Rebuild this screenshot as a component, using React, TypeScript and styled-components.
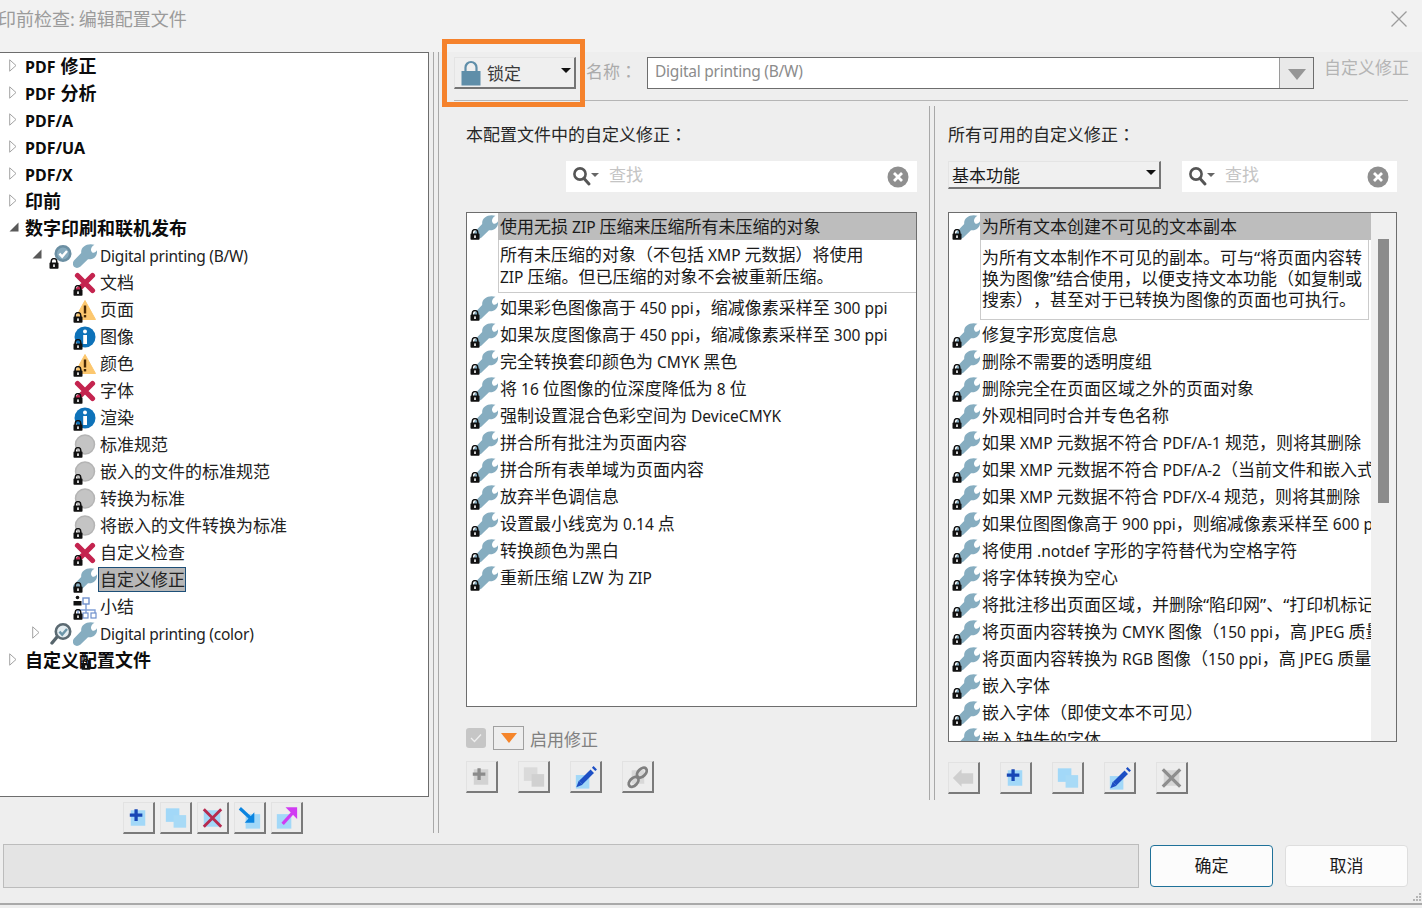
import React from "react";
import styled, { createGlobalStyle } from "styled-components";

const GlobalStyle = createGlobalStyle`
  html, body {
    margin: 0;
    padding: 0;
    background: #eeeeee;
  }
  body {
    font-family: "Noto Sans", "Noto Sans CJK SC", sans-serif;
    font-size: 17px;
    color: #1a1a1a;
    text-spacing-trim: space-all;
  }
`;

// latin runs are a bit smaller than the CJK around them
const Latin = styled.span`
  font-size: 15.5px;
`;

// the dialog's full-width colon sits centred in its cell
const Colon = styled.span`
  font-family: "Noto Sans CJK TC", sans-serif;
`;

const Txt = ({ children }: { children: string }) => (
  <>
    {children.split(/([A-Za-z0-9 .,()/\-]+)/).map((part, i) =>
      i % 2 === 1 ? <Latin key={i}>{part}</Latin> : part
    )}
  </>
);

/* ---------- icons ---------- */

const Wrench = ({ size = 24 }: { size?: number }) => (
  <svg width={size} height={size} viewBox="0 0 24 24">
    <path
      d="M21.5 0.8C14.5 -1.2 7.5 2.5 8.2 9L1 16.5C-0.5 18.5 -0.5 21 1 22.8C3 24.5 5.5 24.2 7.5 22.5L15 15.2C20 16.2 24.8 12.5 24 6.2C22.8 8.4 20.6 9.4 19 8.2C17 6.6 18 2.4 21.5 0.8Z"
      fill="#86adc0"
    />
  </svg>
);

const SmallLock = () => (
  <svg width="10" height="11" viewBox="0 0 10 11">
    <path d="M2.2 5V3.4a2.8 2.8 0 0 1 5.6 0V5" fill="none" stroke="#111" strokeWidth="1.5" />
    <rect x="0.5" y="4.6" width="9" height="6.2" rx="0.8" fill="#111" />
    <rect x="4.2" y="6.4" width="1.6" height="2.6" fill="#fff" />
  </svg>
);

const BigLock = () => (
  <svg width="20" height="26" viewBox="0 0 20 26">
    <path d="M4.5 12V7.5a5.5 5.5 0 0 1 11 0V12" fill="none" stroke="#5f8ea9" strokeWidth="2.2" />
    <rect x="0.5" y="11" width="19" height="14.5" fill="#5f8ea9" />
  </svg>
);

const ErrorIcon = () => (
  <svg width="22" height="22" viewBox="0 0 22 22">
    <path d="M3.5 3.5L18.5 18.5M18.5 3.5L3.5 18.5" stroke="#c4244f" strokeWidth="5.2" strokeLinecap="round" />
  </svg>
);

const WarnIcon = () => (
  <svg width="22" height="22" viewBox="0 0 22 22">
    <path d="M11 1.5L21.5 20.5H0.5Z" fill="#fcc76e" stroke="#fcc76e" strokeLinejoin="round" />
    <rect x="9.8" y="6.5" width="2.4" height="8" fill="#4a2a05" />
    <rect x="9.8" y="16" width="2.4" height="2.4" fill="#4a2a05" />
  </svg>
);

const InfoIcon = () => (
  <svg width="22" height="22" viewBox="0 0 22 22">
    <circle cx="11" cy="11" r="10.5" fill="#0e72b9" />
    <rect x="9.2" y="9" width="3.8" height="9" fill="#fff" />
    <circle cx="11" cy="5.6" r="2" fill="#fff" />
  </svg>
);

const IdleIcon = () => (
  <svg width="22" height="22" viewBox="0 0 22 22">
    <circle cx="11" cy="10.5" r="9.5" fill="#c4c4c4" stroke="#b4b4b4" strokeWidth="1.5" />
  </svg>
);

const SummaryIcon = () => (
  <svg width="24" height="24" viewBox="0 0 24 24">
    <path d="M13 8V20M5 15H22V20M5 15V20" fill="none" stroke="#7f9ed6" strokeWidth="1.4" />
    <rect x="10" y="3" width="6" height="6" fill="#fff" stroke="#6f90cc" strokeWidth="1.4" />
    <rect x="10" y="18" width="5" height="5" fill="#fff" stroke="#6f90cc" strokeWidth="1.2" />
    <rect x="18" y="18" width="5" height="5" fill="#fff" stroke="#6f90cc" strokeWidth="1.2" />
    <circle cx="4.5" cy="2.5" r="1.8" fill="#111" />
    <rect x="0.5" y="6" width="8" height="4.5" fill="#111" />
  </svg>
);

// filled lens on the active profile, clear lens on the other one
const InspectIcon = ({ active }: { active?: boolean }) => (
  <svg width="22" height="24" viewBox="0 0 22 24">
    {!active && <path d="M7 15L2 21" stroke="#57656c" strokeWidth="3.4" strokeLinecap="round" />}
    <circle
      cx="13"
      cy="9.5"
      r="7.2"
      fill={active ? "#86aabd" : "#e4edf1"}
      stroke={active ? "#6b8fa3" : "#5b6a72"}
      strokeWidth="2.6"
    />
    <path
      d="M9.4 9.6L12.2 12.6L17 7"
      fill="none"
      stroke={active ? "#fff" : "#6b95a8"}
      strokeWidth="2.4"
    />
  </svg>
);

const Closed = () => (
  <svg width="8" height="13" viewBox="0 0 8 13">
    <path d="M0.7 0.8L7 6.5L0.7 12.2Z" fill="#fff" stroke="#a3a3a3" />
  </svg>
);

const Open = () => (
  <svg width="10" height="10" viewBox="0 0 10 10">
    <path d="M9.5 0.5V9.5H0.5Z" fill="#595959" />
  </svg>
);

const SearchIcon = () => (
  <svg width="28" height="22" viewBox="0 0 28 22">
    <circle cx="8" cy="8" r="5.6" fill="none" stroke="#555" strokeWidth="2.6" />
    <path d="M12 12.5L17 18" stroke="#555" strokeWidth="3" strokeLinecap="round" />
    <path d="M19 7H27L23 11Z" fill="#666" />
  </svg>
);

const ClearIcon = () => (
  <svg width="22" height="22" viewBox="0 0 22 22">
    <circle cx="11" cy="11" r="10.5" fill="#8f8f8f" />
    <path d="M7 7L15 15M15 7L7 15" stroke="#fff" strokeWidth="2.8" />
  </svg>
);

type ToolKind = "add" | "copy" | "remove" | "import" | "export" | "edit" | "addOff" | "copyOff" | "link" | "back" | "removeOff";

const ToolIcon = ({ kind }: { kind: ToolKind }) => {
  const sky = "#a2d8f8";
  return (
    <svg width="30" height="30" viewBox="0 0 30 30">
      {kind === "add" && (
        <>
          <rect x="7" y="7" width="15" height="16" fill={sky} />
          <path d="M12.5 6V18M6 12H19" stroke="#1747b5" strokeWidth="3.4" />
        </>
      )}
      {kind === "addOff" && (
        <>
          <rect x="7" y="7" width="15" height="16" fill="#d2d2d2" />
          <path d="M12.5 6V18M6 12H19" stroke="#8b8b8b" strokeWidth="3.4" />
        </>
      )}
      {kind === "copy" && (
        <>
          <rect x="5" y="5" width="14" height="14" fill={sky} />
          <rect x="13" y="12" width="13" height="13" fill="#a8daf6" />
        </>
      )}
      {kind === "copyOff" && (
        <>
          <rect x="5" y="5" width="14" height="14" fill="#dadada" />
          <rect x="13" y="12" width="13" height="13" fill="#d0d0d0" />
        </>
      )}
      {kind === "remove" && (
        <>
          <rect x="6" y="7" width="17" height="17" fill={sky} />
          <path d="M6 6L24 24M24 6L6 24" stroke="#b62a4f" strokeWidth="3" />
        </>
      )}
      {kind === "removeOff" && (
        <>
          <rect x="7" y="7" width="16" height="16" fill="#d6d6d6" />
          <path d="M6 6L24 24M24 6L6 24" stroke="#8e8e8e" strokeWidth="3.4" />
        </>
      )}
      {kind === "import" && (
        <>
          <rect x="11" y="11" width="15" height="15" fill={sky} />
          <path d="M5 5L17 16" stroke="#0a84e0" strokeWidth="3.4" />
          <path d="M20 9V20H10Z" fill="#0a84e0" />
        </>
      )}
      {kind === "export" && (
        <>
          <rect x="5" y="11" width="15" height="15" fill={sky} />
          <path d="M11 21L22 9" stroke="#d03cf2" strokeWidth="3.4" />
          <path d="M14 4H26V16Z" fill="#d03cf2" />
        </>
      )}
      {kind === "edit" && (
        <>
          <rect x="5" y="13" width="14" height="14" fill={sky} />
          <path d="M10 21L22 9" stroke="#1d4fc4" strokeWidth="5" />
          <path d="M8 19L12 23L5.5 25.5Z" fill="#1d4fc4" />
          <path d="M22.5 4.5L26 8" stroke="#1d4fc4" strokeWidth="2.4" />
        </>
      )}
      {kind === "link" && (
        <>
          <rect x="9" y="8" width="13" height="14" fill="#d8d8d8" />
          <ellipse cx="11" cy="20" rx="6" ry="3.8" fill="none" stroke="#808080" strokeWidth="3" transform="rotate(-45 11 20)" />
          <ellipse cx="19.5" cy="10.5" rx="6" ry="3.8" fill="none" stroke="#808080" strokeWidth="3" transform="rotate(-45 19.5 10.5)" />
        </>
      )}
      {kind === "back" && <path d="M4 15L13 6V10H25V21H13V24Z" fill="#cfcfcf" />}
    </svg>
  );
};

/* ---------- layout ---------- */

const Page = styled.div`
  position: relative;
  width: 1422px;
  height: 908px;
  overflow: hidden;
  background: #eeeeee;
`;

const TitleBar = styled.div`
  height: 52px;
  box-sizing: border-box;
  display: flex;
  justify-content: space-between;
  padding: 7px 15px 0 0;
  background: #f2f2f2;
`;

const Title = styled.div`
  margin-left: -2px;
  font-size: 18px;
  line-height: 24px;
  color: #9b9b9b;
`;

const Body = styled.div`
  display: flex;
  height: 785px;
`;

const LeftPane = styled.div`
  width: 430px;
  margin-left: -1px;
  display: flex;
  flex-direction: column;
`;

const Tree = styled.div`
  height: 745px;
  box-sizing: border-box;
  border: 1px solid #6d6d6d;
  background: #fff;
`;

const TreeRow = styled.div<{ $indent: number; $bold?: boolean }>`
  position: relative;
  height: 27px;
  display: flex;
  align-items: center;
  padding-left: ${(p) => p.$indent}px;
  font-weight: ${(p) => (p.$bold ? 700 : 400)};
  font-size: ${(p) => (p.$bold ? 18 : 17)}px;
  color: ${(p) => (p.$bold ? "#0c0c0c" : "#222")};
  ${Latin} {
    font-size: ${(p) => (p.$bold ? 16 : 15.5)}px;
    word-spacing: ${(p) => (p.$bold ? 1 : 0)}px;
    letter-spacing: ${(p) => (p.$bold ? 0 : -0.24)}px;
  }
`;

const Twisty = styled.span<{ $width: number }>`
  flex: none;
  width: ${(p) => p.$width}px;
  display: flex;
  align-items: center;
  margin-top: -3px;
`;

const IconSlot = styled.span`
  position: relative;
  flex: none;
  width: 24px;
  height: 24px;
  display: flex;
  align-items: center;
  justify-content: center;
`;

const LockBadge = styled.span`
  position: absolute;
  left: 0;
  bottom: -1px;
  display: flex;
`;

const ProfileLock = styled.span`
  position: absolute;
  left: 56px;
  bottom: 2px;
  display: flex;
`;

const NodeLabel = styled.span<{ $selected?: boolean }>`
  margin-left: 3px;
  line-height: 23px;
  white-space: nowrap;
  ${(p) =>
    p.$selected &&
    `
    margin-left: 1px;
    padding-left: 1px;
    background: #b7b7b7;
    border: 1px solid #1d4f78;
  `}
`;

const BoldLabel = styled.span`
  position: relative;
  line-height: 24px;
  margin-bottom: 1px;
  white-space: nowrap;
`;

const TreeTools = styled.div`
  display: flex;
  justify-content: center;
  gap: 5px;
  margin-top: 5px;
  padding-right: 2px;
`;

const ToolButton = styled.button`
  flex: none;
  width: 32px;
  height: 32px;
  padding: 0;
  box-sizing: border-box;
  display: flex;
  align-items: center;
  justify-content: center;
  background: #ededed;
  border-style: solid;
  border-width: 1px 2px 2px 1px;
  border-color: #e2e2e2 #7a7a7a #7a7a7a #e2e2e2;
`;

const Splitter = styled.div`
  flex: none;
  width: 4px;
  margin-left: 4px;
  border-left: 1px solid #a8a8a8;
  border-right: 1px solid #a8a8a8;
  height: 781px;
`;

const RightPane = styled.div`
  flex: none;
  width: 966px;
  margin-left: 15px;
  position: relative;
`;

const TopRow = styled.div`
  height: 49px;
  box-sizing: border-box;
  display: flex;
  padding-top: 5px;
  width: 954px;
  border-bottom: 1px solid #b5b5b5;
`;

const LockCombo = styled.div`
  flex: none;
  width: 122px;
  height: 32px;
  box-sizing: border-box;
  display: flex;
  align-items: center;
  padding-left: 6px;
  background: #efefef;
  border-style: solid;
  border-width: 1px 2px 2px 1px;
  border-color: #e4e4e4 #757575 #757575 #e4e4e4;
  color: #3a3a3a;
`;

const ComboText = styled.span`
  flex: 1;
  margin-left: 6px;
`;

const CategoryText = styled.span`
  flex: 1;
`;

const ComboArrow = styled.span`
  width: 0;
  height: 0;
  margin-right: 3px;
  margin-top: -4px;
  border-left: 5px solid transparent;
  border-right: 5px solid transparent;
  border-top: 5px solid #111;
`;

const NameLabel = styled.span`
  flex: none;
  width: 61px;
  margin-left: 10px;
  line-height: 28px;
  color: #ababab;
`;

const NameField = styled.div`
  flex: none;
  width: 667px;
  height: 32px;
  box-sizing: border-box;
  display: flex;
  border: 1px solid #6d6d6d;
  background: #fff;
  ${Latin} {
    letter-spacing: -0.24px;
  }
`;

const NameValue = styled.span`
  flex: 1;
  padding-left: 7px;
  line-height: 26px;
  color: #8c8c8c;
`;

const NameDrop = styled.span`
  flex: none;
  width: 33px;
  display: flex;
  align-items: center;
  justify-content: center;
  background: #e9e9e9;
  border-left: 1px solid #9a9a9a;
`;

const NameTriangle = styled.span`
  width: 0;
  height: 0;
  margin-top: 2px;
  border-left: 9px solid transparent;
  border-right: 9px solid transparent;
  border-top: 11px solid #969696;
`;

const NameHint = styled.span`
  flex: none;
  margin-left: 10px;
  line-height: 22px;
  color: #b4b4b4;
`;

const Columns = styled.div`
  display: flex;
  padding: 5px 0 0 12px;
`;

const Column = styled.div<{ $width: number }>`
  flex: none;
  width: ${(p) => p.$width}px;
  padding-top: 16px;
`;

const ColumnSplit = styled.div`
  flex: none;
  width: 4px;
  height: 694px;
  margin: 0 13px 0 12px;
  border-left: 1px solid #a8a8a8;
  border-right: 1px solid #a8a8a8;
`;

const ColumnTitle = styled.div`
  height: 24px;
  line-height: 24px;
  color: #262626;
`;

const SearchRow = styled.div<{ $between?: boolean }>`
  display: flex;
  justify-content: ${(p) => (p.$between ? "space-between" : "flex-end")};
  margin-top: 15px;
  height: 31px;
`;

const SearchBox = styled.div<{ $width: number }>`
  width: ${(p) => p.$width}px;
  box-sizing: border-box;
  display: flex;
  align-items: center;
  padding: 0 8px 0 6px;
  background: #fff;
`;

const SearchHint = styled.span`
  flex: 1;
  margin-left: 9px;
  margin-top: -7px;
  color: #c4c4c4;
`;

const CategoryCombo = styled.div`
  width: 213px;
  height: 28px;
  box-sizing: border-box;
  display: flex;
  align-items: center;
  padding-left: 3px;
  background: #f0f0f0;
  border-style: solid;
  border-width: 1px 2px 2px 1px;
  border-color: #e4e4e4 #757575 #757575 #e4e4e4;
`;

const List = styled.div<{ $height: number }>`
  display: flex;
  margin-top: 20px;
  height: ${(p) => p.$height}px;
  box-sizing: border-box;
  border: 1px solid #6d6d6d;
  background: #fff;
  overflow: hidden;
`;

const ListBody = styled.div`
  flex: 1;
  min-width: 0;
  overflow: hidden;
`;

const Track = styled.div`
  flex: none;
  width: 25px;
  padding: 26px 0 0 7px;
  box-sizing: border-box;
  background: #f0f0f0;
`;

const Thumb = styled.div`
  width: 11px;
  height: 264px;
  background: #8b8b8b;
`;

const ListRow = styled.div`
  height: 27px;
  display: flex;
  padding-left: 3px;
`;

const FixSlot = styled.span`
  position: relative;
  flex: none;
  width: 28px;
  height: 27px;
  display: flex;
  align-items: center;
  justify-content: flex-end;
`;

const FixBadge = styled.span`
  position: absolute;
  left: 0;
  bottom: 0;
  display: flex;
`;

const FixLabel = styled.span<{ $selected?: boolean }>`
  flex: 1;
  min-width: 0;
  padding-left: 2px;
  line-height: 27px;
  white-space: nowrap;
  overflow: hidden;
  background: ${(p) => (p.$selected ? "#bdbdbd" : "transparent")};
`;

const FixDetail = styled.div<{ $top: number; $bottom: number; $line: number; $after: number; $boxed?: boolean }>`
  margin: 0 ${(p) => (p.$boxed ? 2 : 0)}px ${(p) => p.$after}px 31px;
  padding: ${(p) => p.$top}px 0 ${(p) => p.$bottom}px 1px;
  line-height: ${(p) => p.$line}px;
  white-space: nowrap;
  border-left: 1px solid #cbcbcb;
  border-bottom: 1px solid #cbcbcb;
  ${(p) => p.$boxed && "border-right: 1px solid #cbcbcb;"}
`;

const EnableRow = styled.div`
  display: flex;
  align-items: center;
  height: 24px;
  margin-top: 19px;
`;

const CheckBox = styled.span`
  width: 20px;
  height: 20px;
  display: flex;
  align-items: center;
  justify-content: center;
  border-radius: 3px;
  background: #c6c6c6;
`;

const MenuButton = styled.span`
  width: 31px;
  height: 24px;
  margin-left: 7px;
  box-sizing: border-box;
  display: flex;
  align-items: center;
  justify-content: center;
  border: 1px solid #a0a0a0;
`;

const MenuTriangle = styled.span`
  width: 0;
  height: 0;
  border-left: 8px solid transparent;
  border-right: 8px solid transparent;
  border-top: 10px solid #f5852a;
`;

const EnableLabel = styled.span`
  margin-left: 6px;
  color: #808080;
`;

const ToolRow = styled.div<{ $top: number }>`
  display: flex;
  gap: 20px;
  margin-top: ${(p) => p.$top}px;
`;

const Footer = styled.div`
  display: flex;
  align-items: center;
  height: 44px;
  margin-top: 7px;
  padding-left: 3px;
`;

const StatusBox = styled.div`
  width: 1136px;
  height: 44px;
  box-sizing: border-box;
  background: #e4e4e4;
  border: 1px solid #bcbcbc;
`;

const DialogButton = styled.button<{ $primary?: boolean }>`
  flex: none;
  width: 123px;
  height: 42px;
  margin-left: ${(p) => (p.$primary ? 11 : 12)}px;
  padding: 0 0 4px;
  font: inherit;
  color: #1a1a1a;
  background: #fcfcfc;
  border-radius: 4px;
  border: 1px solid ${(p) => (p.$primary ? "#1f7199" : "#dedede")};
`;

const BottomEdge = styled.div`
  height: 2px;
  margin-top: 15px;
  background: #a9a9a9;
`;

const CloseButton = styled.span`
  display: flex;
  margin-top: 4px;
`;

const Grip = styled.span`
  position: absolute;
  right: 0;
  bottom: 3px;
  display: flex;
`;

const Callout = styled.div`
  position: absolute;
  left: 442px;
  top: 39px;
  width: 143px;
  height: 68px;
  box-sizing: border-box;
  border: 5px solid #f5822c;
  pointer-events: none;
`;

/* ---------- data ---------- */

type Status = "error" | "warn" | "info" | "idle" | "fix" | "summary";

const checks: { label: string; status: Status; selected?: boolean }[] = [
  { label: "文档", status: "error" },
  { label: "页面", status: "warn" },
  { label: "图像", status: "info" },
  { label: "颜色", status: "warn" },
  { label: "字体", status: "error" },
  { label: "渲染", status: "info" },
  { label: "标准规范", status: "idle" },
  { label: "嵌入的文件的标准规范", status: "idle" },
  { label: "转换为标准", status: "idle" },
  { label: "将嵌入的文件转换为标准", status: "idle" },
  { label: "自定义检查", status: "error" },
  { label: "自定义修正", status: "fix", selected: true },
  { label: "小结", status: "summary" },
];

const statusIcon = (s: Status) => {
  if (s === "error") return <ErrorIcon />;
  if (s === "warn") return <WarnIcon />;
  if (s === "info") return <InfoIcon />;
  if (s === "idle") return <IdleIcon />;
  if (s === "summary") return <SummaryIcon />;
  return <Wrench />;
};

const profileFixes = [
  "如果彩色图像高于 450 ppi，缩减像素采样至 300 ppi",
  "如果灰度图像高于 450 ppi，缩减像素采样至 300 ppi",
  "完全转换套印颜色为 CMYK 黑色",
  "将 16 位图像的位深度降低为 8 位",
  "强制设置混合色彩空间为 DeviceCMYK",
  "拼合所有批注为页面内容",
  "拼合所有表单域为页面内容",
  "放弃半色调信息",
  "设置最小线宽为 0.14 点",
  "转换颜色为黑白",
  "重新压缩 LZW 为 ZIP",
];

const availableFixes = [
  "修复字形宽度信息",
  "删除不需要的透明度组",
  "删除完全在页面区域之外的页面对象",
  "外观相同时合并专色名称",
  "如果 XMP 元数据不符合 PDF/A-1 规范，则将其删除",
  "如果 XMP 元数据不符合 PDF/A-2（当前文件和嵌入式文件）规范，则将其删除",
  "如果 XMP 元数据不符合 PDF/X-4 规范，则将其删除",
  "如果位图图像高于 900 ppi，则缩减像素采样至 600 ppi",
  "将使用 .notdef 字形的字符替代为空格字符",
  "将字体转换为空心",
  "将批注移出页面区域，并删除“陷印网”、“打印机标记”",
  "将页面内容转换为 CMYK 图像（150 ppi，高 JPEG 质量）",
  "将页面内容转换为 RGB 图像（150 ppi，高 JPEG 质量）",
  "嵌入字体",
  "嵌入字体（即使文本不可见）",
  "嵌入缺失的字体",
];

const FixRow = ({ label, selected }: { label: string; selected?: boolean }) => (
  <ListRow>
    <FixSlot>
      <Wrench />
      <FixBadge>
        <SmallLock />
      </FixBadge>
    </FixSlot>
    <FixLabel $selected={selected}>
      <Txt>{label}</Txt>
    </FixLabel>
  </ListRow>
);

const TopNode = ({ label, open }: { label: string; open?: boolean }) => (
  <TreeRow $indent={9} $bold>
    <Twisty $width={16}>{open ? <Open /> : <Closed />}</Twisty>
    <BoldLabel>
      <Txt>{label}</Txt>
    </BoldLabel>
  </TreeRow>
);

export default function App() {
  return (
    <Page>
      <GlobalStyle />
      <TitleBar>
        <Title>
          <Txt>印前检查: 编辑配置文件</Txt>
        </Title>
        <CloseButton>
          <svg width="16" height="16" viewBox="0 0 16 16">
            <path d="M0.5 0.5L15.5 15.5M15.5 0.5L0.5 15.5" stroke="#9c9c9c" strokeWidth="1.3" />
          </svg>
        </CloseButton>
      </TitleBar>

      <Body>
        <LeftPane>
          <Tree>
            <TopNode label="PDF 修正" />
            <TopNode label="PDF 分析" />
            <TopNode label="PDF/A" />
            <TopNode label="PDF/UA" />
            <TopNode label="PDF/X" />
            <TopNode label="印前" />
            <TopNode label="数字印刷和联机发布" open />
            <TreeRow $indent={32}>
              <Twisty $width={17}>
                <Open />
              </Twisty>
              <IconSlot>
                <InspectIcon active />
                <LockBadge>
                  <SmallLock />
                </LockBadge>
              </IconSlot>
              <IconSlot>
                <Wrench />
              </IconSlot>
              <NodeLabel>
                <Txt>Digital printing (B/W)</Txt>
              </NodeLabel>
            </TreeRow>
            {checks.map((c) => (
              <TreeRow key={c.label} $indent={73}>
                <IconSlot>
                  {statusIcon(c.status)}
                  <LockBadge>
                    <SmallLock />
                  </LockBadge>
                </IconSlot>
                <NodeLabel $selected={c.selected}>{c.label}</NodeLabel>
              </TreeRow>
            ))}
            <TreeRow $indent={32}>
              <Twisty $width={17}>
                <Closed />
              </Twisty>
              <IconSlot>
                <InspectIcon />
              </IconSlot>
              <IconSlot>
                <Wrench />
              </IconSlot>
              <NodeLabel>
                <Txt>Digital printing (color)</Txt>
              </NodeLabel>
            </TreeRow>
            <TreeRow $indent={9} $bold>
              <Twisty $width={16}>
                <Closed />
              </Twisty>
              <BoldLabel>
                自定义配置文件
                <ProfileLock>
                  <SmallLock />
                </ProfileLock>
              </BoldLabel>
            </TreeRow>
          </Tree>
          <TreeTools>
            <ToolButton>
              <ToolIcon kind="add" />
            </ToolButton>
            <ToolButton>
              <ToolIcon kind="copy" />
            </ToolButton>
            <ToolButton>
              <ToolIcon kind="remove" />
            </ToolButton>
            <ToolButton>
              <ToolIcon kind="import" />
            </ToolButton>
            <ToolButton>
              <ToolIcon kind="export" />
            </ToolButton>
          </TreeTools>
        </LeftPane>

        <Splitter />

        <RightPane>
          <TopRow>
            <LockCombo>
              <BigLock />
              <ComboText>锁定</ComboText>
              <ComboArrow />
            </LockCombo>
            <NameLabel>
              名称<Colon>：</Colon>
            </NameLabel>
            <NameField>
              <NameValue>
                <Txt>Digital printing (B/W)</Txt>
              </NameValue>
              <NameDrop>
                <NameTriangle />
              </NameDrop>
            </NameField>
            <NameHint>自定义修正</NameHint>
          </TopRow>

          <Columns>
            <Column $width={451}>
              <ColumnTitle>
                本配置文件中的自定义修正<Colon>：</Colon>
              </ColumnTitle>
              <SearchRow>
                <SearchBox $width={351}>
                  <SearchIcon />
                  <SearchHint>查找</SearchHint>
                  <ClearIcon />
                </SearchBox>
              </SearchRow>
              <List $height={495}>
                <ListBody>
                  <FixRow label="使用无损 ZIP 压缩来压缩所有未压缩的对象" selected />
                  <FixDetail $top={4} $bottom={4} $line={22} $after={1}>
                    <Txt>所有未压缩的对象（不包括 XMP 元数据）将使用</Txt>
                    <br />
                    <Txt>ZIP 压缩。但已压缩的对象不会被重新压缩。</Txt>
                  </FixDetail>
                  {profileFixes.map((f) => (
                    <FixRow key={f} label={f} />
                  ))}
                </ListBody>
              </List>
              <EnableRow>
                <CheckBox>
                  <svg width="12" height="10" viewBox="0 0 12 10">
                    <path d="M1 5L4.5 8.5L11 1.5" fill="none" stroke="#efefef" strokeWidth="1.3" />
                  </svg>
                </CheckBox>
                <MenuButton>
                  <MenuTriangle />
                </MenuButton>
                <EnableLabel>启用修正</EnableLabel>
              </EnableRow>
              <ToolRow $top={11}>
                <ToolButton>
                  <ToolIcon kind="addOff" />
                </ToolButton>
                <ToolButton>
                  <ToolIcon kind="copyOff" />
                </ToolButton>
                <ToolButton>
                  <ToolIcon kind="edit" />
                </ToolButton>
                <ToolButton>
                  <ToolIcon kind="link" />
                </ToolButton>
              </ToolRow>
            </Column>

            <ColumnSplit />

            <Column $width={449}>
              <ColumnTitle>
                所有可用的自定义修正<Colon>：</Colon>
              </ColumnTitle>
              <SearchRow $between>
                <CategoryCombo>
                  <CategoryText>基本功能</CategoryText>
                  <ComboArrow />
                </CategoryCombo>
                <SearchBox $width={215}>
                  <SearchIcon />
                  <SearchHint>查找</SearchHint>
                  <ClearIcon />
                </SearchBox>
              </SearchRow>
              <List $height={530}>
                <ListBody>
                  <FixRow label="为所有文本创建不可见的文本副本" selected />
                  <FixDetail $top={7} $bottom={9} $line={21} $after={1} $boxed>
                    为所有文本制作不可见的副本。可与“将页面内容转
                    <br />
                    换为图像”结合使用，以便支持文本功能（如复制或
                    <br />
                    搜索），甚至对于已转换为图像的页面也可执行。
                  </FixDetail>
                  {availableFixes.map((f) => (
                    <FixRow key={f} label={f} />
                  ))}
                </ListBody>
                <Track>
                  <Thumb />
                </Track>
              </List>
              <ToolRow $top={20}>
                <ToolButton>
                  <ToolIcon kind="back" />
                </ToolButton>
                <ToolButton>
                  <ToolIcon kind="add" />
                </ToolButton>
                <ToolButton>
                  <ToolIcon kind="copy" />
                </ToolButton>
                <ToolButton>
                  <ToolIcon kind="edit" />
                </ToolButton>
                <ToolButton>
                  <ToolIcon kind="removeOff" />
                </ToolButton>
              </ToolRow>
            </Column>
          </Columns>
        </RightPane>
      </Body>

      <Footer>
        <StatusBox />
        <DialogButton $primary>确定</DialogButton>
        <DialogButton>取消</DialogButton>
      </Footer>
      <BottomEdge />

      <Grip>
        <svg width="12" height="12" viewBox="0 0 12 12" fill="#b5b5b5">
          <rect x="9" y="0" width="2" height="2" />
          <rect x="6" y="3" width="2" height="2" />
          <rect x="9" y="3" width="2" height="2" />
          <rect x="3" y="6" width="2" height="2" />
          <rect x="6" y="6" width="2" height="2" />
          <rect x="9" y="6" width="2" height="2" />
        </svg>
      </Grip>

      <Callout />
    </Page>
  );
}
